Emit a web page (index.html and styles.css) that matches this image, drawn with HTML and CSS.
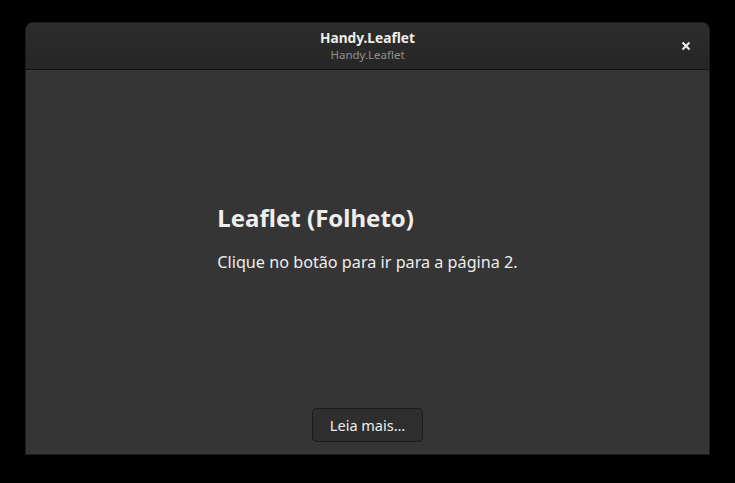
FILE: index.html
```html
<!DOCTYPE html>
<html lang="pt">
<head>
<meta charset="utf-8">
<link rel="stylesheet" href="styles.css">
</head>
<body>
<div class="window">
  <header class="headerbar">
    <div class="titles">
      <div class="title">Handy.Leaflet</div>
      <div class="subtitle">Handy.Leaflet</div>
    </div>
    <button class="close" aria-label="Fechar">
      <svg width="10" height="10" viewBox="0 0 10 10"><path d="M1.5 1.5 L8.5 8.5 M8.5 1.5 L1.5 8.5" stroke="#eeeeec" stroke-width="2" stroke-linecap="butt"/></svg>
    </button>
  </header>
  <main class="content">
    <div class="page">
      <div class="text">
        <h1 class="heading">Leaflet (Folheto)</h1>
        <p class="desc">Clique no botão para ir para a página 2.</p>
      </div>
    </div>
    <div class="actions">
      <button class="btn">Leia mais…</button>
    </div>
  </main>
</div>
</body>
</html>
```
FILE: styles.css
```css
html, body {
  margin: 0;
  padding: 0;
  background: #000;
  width: 735px;
  height: 483px;
  overflow: hidden;
  font-family: "Noto Sans", "DejaVu Sans", sans-serif;
}
.window {
  margin: 22px 0 0 25px;
  width: 685px;
  height: 433px;
  box-sizing: border-box;
  border: 1px solid #1c1c1c;
  border-radius: 8px 8px 0 0;
  display: flex;
  flex-direction: column;
  overflow: hidden;
  background: #353535;
}
.headerbar {
  height: 47px;
  box-sizing: border-box;
  border-bottom: 1px solid #131313;
  background: linear-gradient(#2c2c2c, #262626);
  display: flex;
  align-items: center;
  justify-content: center;
  position: relative;
  flex: none;
}
.titles {
  text-align: center;
  line-height: 1;
  margin-top: -1px;
}
.title {
  color: #eeeeec;
  font-weight: 700;
  font-size: 13.7px;
  line-height: 18px;
}
.subtitle {
  color: #919190;
  font-size: 11.5px;
  line-height: 15px;
}
.close {
  position: absolute;
  right: 16px;
  top: 16px;
  width: 14px;
  height: 14px;
  padding: 0;
  border: none;
  background: transparent;
  display: flex;
  align-items: center;
  justify-content: center;
}
.content {
  flex: 1;
  display: flex;
  flex-direction: column;
}
.page {
  flex: 1;
  display: flex;
  align-items: center;
  justify-content: center;
  padding-bottom: 4px;
}
.text {
  color: #eeeeec;
}
.heading {
  margin: 0;
  font-size: 24px;
  font-weight: 700;
  line-height: 30px;
}
.desc {
  margin: 19px 0 0;
  font-size: 16.2px;
  line-height: 20px;
}
.actions {
  display: flex;
  justify-content: center;
  padding-bottom: 12px;
}
.btn {
  width: 111px;
  height: 34px;
  box-sizing: border-box;
  border: 1px solid #1b1b1b;
  border-radius: 5px;
  background: #2e2e2e;
  color: #eeeeec;
  font-family: "Noto Sans", "DejaVu Sans", sans-serif;
  font-size: 14.5px;
  padding: 0;
}
```
